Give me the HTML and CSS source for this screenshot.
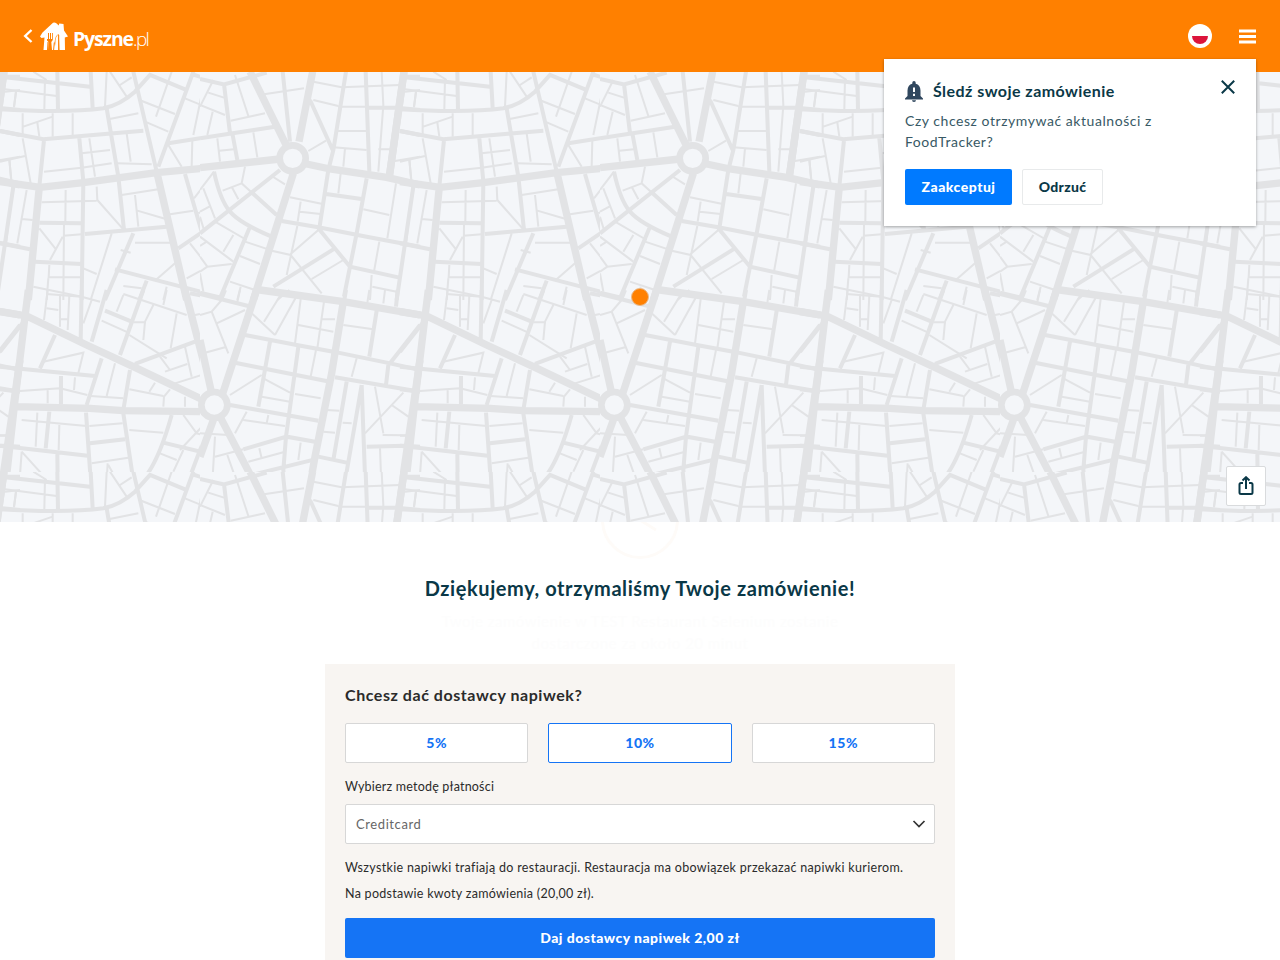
FILE: index.html
```html
<!DOCTYPE html>
<html lang="pl">
<head>
<meta charset="utf-8">
<title>Pyszne.pl</title>
<link rel="stylesheet" href="styles.css">
</head>
<body>
<header class="topbar">
  <div class="brand">
    <svg class="back" viewBox="0 0 10 14"><path d="M8.500 1 2.200 7 8.500 13"/></svg>
    <svg class="house" viewBox="0 0 28 29"><path fill="#fff" d="M0 14.500 2.500 10.500 13 .8Q14.500 0 16 1L18.800 3.500 19.200 1.500 23.500 2 24 8.500 28 14.500 24.800 15.500 25 28H19.500L18.800 12Q15 13 14.500 21L15.500 28H12L11.300 20 12.800 18V11H12V17H11V11H10V17H9V11H8V17H7V18.500L8.500 20 8 28H3.500L4.500 15.500 1.500 16Z"/><path d="M18.300 12.500V28H14.500L15.400 21Q15 15 18.300 12.500Z" fill="#fff"/><path class="cutlery" d="M14.300 20.500 13.600 28M18.700 13V28M8 20 7.500 28"/></svg>
    <span class="wordmark"><b>Pyszne</b><span class="tld">.pl</span></span>
  </div>
  <div class="tools">
    <svg class="flag" viewBox="0 0 24 24"><circle cx="12" cy="12" r="12" fill="#fff"/><path d="M4 12h16a8 8 0 0 1-16 0Z" fill="#dc143c"/></svg>
    <svg class="burger" viewBox="0 0 17 15"><path d="M0 2h17M0 7.500h17M0 13h17"/></svg>
  </div>
</header>

<section class="map">
<svg class="map-canvas" width="1280" height="450">
<defs>
<pattern id="streets" x="200" y="0" width="400" height="400" viewBox="0 0 400 400" patternUnits="userSpaceOnUse">
<rect width="400" height="400" fill="#f4f6f9"/>
<g class="roads" transform="translate(0 -2) scale(.33333)">
<path class="lg" d="M150 5 278 265M338 5 297 215M0 293 240 267M320 282 390 297 560 322 660 345M280 310 160 690M612 5 568 320"/>
<path class="md" d="M0 27 72 43 200 8M72 43 90 190M0 205 225 170M248 5 270 215M98 195 112 270M330 90 398 240M438 5 400 240 385 300 358 475M497 5 508 305M500 113H590L660 120M612 20H660M600 183 660 195M245 453 355 472 500 500 660 530M378 372 490 388M500 325 470 490 450 590 432 680M640 350 590 690M355 475 450 590 595 622M220 650 400 538M42 305Q60 390 90 425T215 500M0 490 240 300M158 370 230 435M148 475 60 685M0 668 60 682"/>
<path d="M160 187 172 262M545 5 550 105M340 90 415 108M105 15 145 138M92 152 195 130M40 30 0 110M25 68 72 83M0 105 75 135M38 125 22 195M52 205 60 275M58 242 102 238M192 73 312 55M340 35 425 52 600 45M415 110H500M412 183H500M400 232 500 240M550 105 535 305M535 238H570M325 243 378 212M435 235 430 290M615 65 660 60M648 65 642 110M585 273 660 260M628 268 634 330M215 318 255 343M422 310 415 370M588 340 562 505M490 418 568 435M270 382 368 402M302 395 293 455M300 425 362 432M292 468 260 615M355 480 272 552M215 542 272 555 365 670M335 627 430 570M538 515 522 605M135 290 125 340 160 372M125 340 68 362M95 350 115 388M42 305 0 360M10 355 45 445M0 425 28 410M0 440 12 480M45 455 140 510M100 495 70 545M0 500 100 575M135 515 205 538M120 558 180 582M0 528 20 515M0 560 22 590 95 582M0 605 22 590M90 635 165 660M122 650 112 690M0 610 10 665M515 615 510 690M517 650 590 665M268 660 232 690"/>
<circle class="ring" cx="278" cy="265" r="39"/>
</g>
<g class="roads" transform="translate(200 -2) scale(.33333)">
<path class="lg" d="M12 5-32 320M0 335 120 352 250 338 470 308 660 290M118 350 85 690M470 305 560 690"/>
<path class="md" d="M132 210 118 350M400 5 470 305M580 5 475 290M0 118Q200 130 310 115Q360 105 405 65L450 15 555 58M272 5 278 115M172 5 174 120M15 22 270 50M0 183 130 208 430 182M238 205 250 335 245 690M320 115 355 320 372 480M255 492 500 470M118 458 245 460M105 575 245 582M0 520 90 538M400 490 315 690M345 598 660 680M505 220 660 195M555 312 605 485M535 535 660 450M440 632 418 690M575 12 660 40"/>
<path d="M218 130V195M100 5 140 30M135 25 133 118M15 58 170 78M48 65 42 112M320 5 315 110M330 5 380 80M360 45 395 22M325 148 415 130M68 130V200M70 170 158 140M112 158 118 200M158 130V200M68 205 92 340M0 275 75 258M28 268 33 325M132 305 245 293 335 280M268 205 285 320M245 250 330 240M350 280 455 283M380 190 392 275M515 5 468 140M418 90 525 132M435 155 505 185M505 225 545 290M577 210 575 290M555 85 660 128M610 50 580 195M640 125 622 195M38 350 18 520M80 360 52 520M65 447 98 450M125 397 290 392M197 360 196 455M192 460 190 690M290 350 292 390 370 478M118 475 168 538M150 570 188 500M190 497 245 493M148 585 146 622H240M335 490 272 690M250 595 290 612M362 540 392 548M405 375 415 470M365 375 475 358M412 422 500 448M405 518H515M510 433 580 422M582 385 640 310M610 355 650 440M595 430 630 410M525 580 470 628M570 520 625 590H660M625 590 560 625M370 648 425 655M500 650 490 690M100 650 245 680M145 625 140 690"/>
</g>
<g class="roads" transform="translate(0 218) scale(.33333)">
<path class="lg" d="M0 150 35 310M170 0 65 320M180 0 430 35 660 75M430 35 395 250 345 500 310 696M60 380 225 696M0 500 40 390M660 210 590 690"/>
<path class="md" d="M0 12 145 48M75 0 65 25M90 345 355 392M135 135 290 165 400 185 560 218 660 240M105 218 390 275M405 262 660 305M210 155 175 350M295 170 258 440M530 62 508 200M570 220 660 105M565 225 558 285M440 275 400 510M485 285 415 690M485 285 500 696M500 470 615 467 660 470M355 500 440 518M130 478 260 440 345 455M155 555 345 508M258 440 250 540 265 690M438 0 432 35M593 0 588 50"/>
<path d="M470 205 455 260M540 475 548 690M430 105 520 118M155 70 225 135M245 10 192 95M290 18 225 135M303 20 285 160M295 105 400 125M372 35 352 175M365 87 405 88M348 180 332 260M50 100 135 60M35 65 85 190M0 75 35 65 65 30M15 188 75 172M90 315 185 255M190 265 270 308M185 320 270 335M285 312 362 325M130 390 255 408M140 365 105 430M205 375 200 400M380 360 418 362M370 425 405 428M428 398 455 400M525 290 550 430M548 435 618 436M495 430 610 308M575 345 625 380M178 475 185 505M145 515 250 487M82 495 105 560M45 440 38 560M0 430 85 435M45 500 130 478M302 458 295 510M508 0 502 38M555 0 550 40M120 0 112 35"/>
<circle class="ring" cx="43" cy="345" r="39"/>
</g>
<g class="roads" transform="translate(200 218) scale(.33333)">
<path class="lg" d="M85 0 75 80 45 330 5 690M0 65 80 78 260 165 400 230 610 330M45 350 270 355 370 362 600 365M555 0 635 310"/>
<path class="md" d="M0 185 75 90M0 230 130 243 285 258M245 0 242 150M320 0 275 155M430 0 360 195M315 62 395 95M165 135 120 235M305 205 260 345M390 240 370 360M405 222 585 155M570 10 720 40M0 298 42 303M183 258V342M0 467 270 498M148 365 137 475M172 490 174 660M258 368 278 655M370 370 405 605M515 375Q480 500 440 555M490 458 600 485M600 480 570 560M640 390 600 480M270 460 375 448"/>
<path d="M0 437H20M305 92 385 128M143 0 132 90M180 15V110M208 15 203 120M140 12 245 20 300 35M140 55 175 60M180 88H205M275 30 250 100M370 12 560 75M370 15 350 65M500 0 490 45M460 45 435 95 430 150M400 97H438M530 70 512 175M388 135 500 205M480 200 510 240M495 245 562 222M555 170 575 260M525 280 605 255M130 215 250 188 235 250M345 220 320 318M272 318 370 325M388 298 490 318M490 350 492 320 510 298M465 278 448 305M555 320V350M60 303 180 295 262 315M225 262 222 300M143 300V340M65 390 260 408M112 368 107 470M178 405 176 480M268 408 368 400M388 420 490 428M275 520 385 503M65 485 140 568M65 485 60 555M323 520 315 655M325 525 378 620M550 375 590 430 630 440M620 395 540 480M550 480 520 545M480 490 530 510M585 75 635 65"/>
<circle class="ring" cx="643" cy="345" r="39"/>
</g>
</pattern>
</defs>
<rect width="1280" height="450" fill="url(#streets)"/>
<g class="places"><text x="333" y="152">Berlin</text><text x="240" y="189">Brandenburg</text><text x="428" y="15">Szczecin</text><text x="496" y="106">Gorzów</text><text x="488" y="126">Wielkopolski</text><text x="240" y="328">Lipsk</text><text x="282" y="400">Chemnitz</text><text x="243" y="420">Zwickau</text><text x="360" y="369">Drezno</text><text x="405" y="266">Chociebuż</text><text x="505" y="238">Zielona Góra</text><text x="524" y="390">Jelenia Góra</text><text x="418" y="349">Budziszyn</text><text x="458" y="368">Görlitz</text></g>
<circle cx="640" cy="225" r="8.500" fill="#ff8000" stroke="#e9b98a" stroke-width="1"/>
</svg>
<button class="share" aria-label="share"><svg viewBox="0 0 16 20"><path d="M5 7H3Q1.500 7 1.500 8.500V16.500Q1.500 18 3 18H13Q14.500 18 14.500 16.500V8.500Q14.500 7 13 7H11M8 13V1.500M4.500 4.500 8 1.200 11.500 4.500"/></svg></button>
</section>

<main class="content">
  <svg class="clock" viewBox="0 0 80 38"><circle cx="40" cy="-2" r="37.500"/><path d="M40-2 56 8"/></svg>
  <h1 class="thanks">Dziękujemy, otrzymaliśmy Twoje zamówienie!</h1>
  <p class="status">Twoje zamówienie w TEST Restaurant Selenium zostanie<br>dostarczone za około 20 minut</p>
  <section class="tip">
    <h2 class="tip-title">Chcesz dać dostawcy napiwek?</h2>
    <div class="options">
      <button class="option">5%</button>
      <button class="option selected">10%</button>
      <button class="option">15%</button>
    </div>
    <p class="label">Wybierz metodę płatności</p>
    <div class="select"><span class="select-text">Creditcard</span><svg class="chevron" viewBox="0 0 14 8"><path d="M1.500 1 7 6.500 12.500 1"/></svg></div>
    <p class="note first">Wszystkie napiwki trafiają do restauracji. Restauracja ma obowiązek przekazać napiwki kurierom.</p>
    <p class="note second">Na podstawie kwoty zamówienia (20,00 zł).</p>
    <button class="submit"><span class="submit-text">Daj dostawcy napiwek 2,00 zł</span></button>
  </section>
</main>

<aside class="notice">
  <div class="notice-head">
    <svg class="bell" viewBox="0 0 18 21"><path d="M0 18.500V17.500L2.500 15V9.500Q2.700 4 7.300 2.800V1.700a1.700 1.700 0 0 1 3.400 0V2.800Q15.300 4 15.500 9.500V15L18 17.500V18.500ZM7 19.200h4a2 1.800 0 0 1-4 0Z" fill="#30475e"/><path d="M9 6.500v4.500M9 12.800v2.200" stroke="#fff" stroke-width="2"/></svg>
    <strong class="notice-title">Śledź swoje zamówienie</strong>
  </div>
  <svg class="close" viewBox="0 0 14 14"><path d="M.8.8 13.200 13.200M13.200.8.8 13.200"/></svg>
  <p class="notice-text">Czy chcesz otrzymywać aktualności z<br>FoodTracker?</p>
  <div class="notice-actions"><button class="accept">Zaakceptuj</button><button class="reject">Odrzuć</button></div>
</aside>
</body>
</html>
```
FILE: styles.css
```css
* { box-sizing: border-box; }
body { margin: 0; height: 960px; overflow: hidden; background: #fff; color: #0a3847; font-family: Lato, "Open Sans", sans-serif; }
button { font-family: inherit; padding: 0; border: 0; border-radius: 2px; }
h1, h2, p { margin: 0; }
svg { display: block; flex: none; fill: none; }

.topbar { height: 72px; background: #ff8000; display: flex; justify-content: space-between; align-items: center; padding: 0 24px 0 23px; }
.brand { display: flex; align-items: center; }
.back { width: 10px; height: 14px; stroke: #fff; stroke-width: 2.4; }
.house { width: 28px; height: 29px; margin-left: 7px; }
.cutlery { stroke: #ff8000; stroke-width: 1; }
.wordmark { margin-left: 5px; margin-top: 5px; color: #fff; font: 19.5px/28px "Open Sans", sans-serif; white-space: nowrap; letter-spacing: -1.15px; }
.tld { font-weight: 300; font-size: 19px; letter-spacing: -1.6px; }
.tools { display: flex; align-items: center; gap: 27px; }
.flag { width: 24px; height: 24px; }
.burger { width: 17px; height: 15px; stroke: #fff; stroke-width: 3; }

.map { height: 450px; position: relative; }
.roads { stroke: #e2e3e5; stroke-width: 6; }
.roads .md { stroke-width: 12; }
.roads .lg { stroke-width: 22; }
.roads .ring { stroke-width: 20; fill: #f4f6f9; }
.places { fill: #30475e; fill-opacity: .018; font: 14px Roboto, sans-serif; }
.share { position: absolute; right: 14px; bottom: 16px; width: 40px; height: 40px; background: #fff; border: 1px solid #d9dbdd; display: grid; place-items: center; }
.share svg { width: 16px; height: 20px; stroke: #0a3847; stroke-width: 2; }

.content { display: flex; flex-direction: column; align-items: center; }
.clock { width: 80px; height: 38px; stroke: #fefbf8; stroke-width: 3; }
.thanks { margin-top: 14px; font-size: 20px; line-height: 28px; letter-spacing: .58px; white-space: nowrap; }
.status { margin-top: 8px; font-size: 15px; line-height: 22px; text-align: center; color: #fdfdfd; letter-spacing: .5px; }
.tip { margin-top: 10px; width: 630px; height: 310px; padding: 19px 20px 0; background: #f8f5f2; color: #2b2b2b; }
.tip-title { font-size: 16px; line-height: 24px; letter-spacing: .55px; }
.options { margin-top: 16px; display: grid; grid-template-columns: repeat(3, 1fr); gap: 20px; }
.option { height: 40px; padding-bottom: 2px; background: #fff; border: 1px solid #d7d7d7; color: #1574f5; font-size: 14px; font-weight: 900; letter-spacing: .6px; }
.selected { border-color: #1574f5; }
.label { margin-top: 14px; font-size: 12.5px; line-height: 20px; letter-spacing: .2px; }
.select { margin-top: 7px; height: 40px; background: #fff; border: 1px solid #d7d7d7; border-radius: 2px; display: flex; align-items: center; justify-content: space-between; padding: 0 8px 0 10px; }
.select-text { font-size: 13px; color: #666; letter-spacing: .6px; }
.chevron { width: 14px; height: 8px; stroke: #333; stroke-width: 1.7; }
.note { font-size: 12.5px; line-height: 20px; white-space: nowrap; letter-spacing: .32px; }
.first { margin-top: 14px; }
.second { margin-top: 6px; letter-spacing: .28px; }
.submit { margin-top: 14px; padding-bottom: 2px; width: 100%; height: 40px; background: #1574f5; color: #fff; font-size: 14px; font-weight: 900; letter-spacing: .47px; }

.notice { position: absolute; left: 884px; top: 59px; width: 372px; height: 167px; padding: 21px; background: #fff; box-shadow: 0 1px 3px rgba(0,0,0,.35); }
.notice-head { display: flex; align-items: center; gap: 10px; height: 22px; }
.bell { width: 18px; height: 21px; }
.notice-title { font-size: 16px; line-height: 22px; letter-spacing: .45px; }
.close { position: absolute; right: 21px; top: 21px; width: 14px; height: 14px; stroke: #0a3847; stroke-width: 2; }
.notice-text { margin-top: 8px; font-size: 14px; line-height: 21px; color: #385965; letter-spacing: .55px; }
.notice-actions { display: flex; gap: 10px; margin-top: 17px; }
.accept { padding-bottom: 1px; width: 107px; height: 36px; background: #007aff; color: #fff; font-size: 14px; font-weight: 900; letter-spacing: .5px; }
.reject { padding-bottom: 1px; width: 81px; height: 36px; background: #fff; border: 1px solid #e8eaeb; color: #0a3847; font-size: 14px; font-weight: 900; letter-spacing: .3px; }
```
